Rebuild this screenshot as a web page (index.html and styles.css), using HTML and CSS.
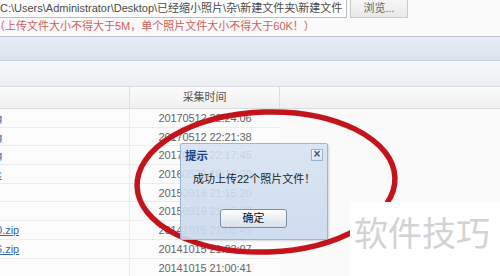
FILE: index.html
```html
<!DOCTYPE html>
<html lang="zh-CN">
<head>
    <meta charset="UTF-8">
    <title>照片上传</title>
    <link rel="stylesheet" href="styles.css">
</head>
<body>
    <div class="upload">
        <div class="upload-path">C:\Users\Administrator\Desktop\已经缩小照片\杂\新建文件夹\新建文件</div>
        <div class="upload-btn">浏览...</div>
    </div>
    <div class="note">（上传文件大小不得大于5M，单个照片文件大小不得大于60K！）</div>

    <div class="panel">
        <div class="panel-head"></div>
        <div class="toolbar"></div>
        <div class="grid-head">
            <div class="col-name"></div>
            <div class="col-time">采集时间</div>
            <div class="col-rest"></div>
        </div>
        <div class="grid-body">
            <div class="row"><a class="col-name" href="#">g</a><div class="col-time">20170512 22:24:06</div></div>
            <div class="row"><a class="col-name" href="#">g</a><div class="col-time">20170512 22:21:38</div></div>
            <div class="row"><a class="col-name" href="#">g</a><div class="col-time">20170512 22:17:45</div></div>
            <div class="row"><a class="col-name" href="#">c</a><div class="col-time">20160523 10:12:30</div></div>
            <div class="row"><a class="col-name" href="#"></a><div class="col-time">20150919 21:15:20</div></div>
            <div class="row"><a class="col-name" href="#"></a><div class="col-time">20150919 21:10:33</div></div>
            <div class="row"><a class="col-name zip" href="#">0.zip</a><div class="col-time">20141015 21:05:45</div></div>
            <div class="row"><a class="col-name zip" href="#">6.zip</a><div class="col-time">20141015 21:03:07</div></div>
            <div class="row"><a class="col-name" href="#"></a><div class="col-time">20141015 21:00:41</div></div>
        </div>
    </div>

    <!-- 红色圈注 -->
    <svg class="mark" viewBox="0 0 500 276" width="500" height="276">
        <ellipse cx="266" cy="182" rx="129" ry="70" transform="rotate(-2 266 182)" fill="none" stroke="#c4131b" stroke-width="5.5"></ellipse>
    </svg>

    <!-- 提示框 -->
    <div class="dialog">
        <div class="dialog-title">
            <span>提示</span>
            <span class="dialog-close">&#215;</span>
        </div>
        <div class="dialog-msg">成功上传22个照片文件！</div>
        <div class="dialog-btn">确定</div>
    </div>

    <div class="watermark">软件技巧</div>
</body>
</html>
```

FILE: styles.css
```css
/* 基础 */
body {
    margin: 0;
    width: 500px;
    height: 276px;
    overflow: hidden;
    position: relative;
    background-color: #fafafa;
    font-family: "Liberation Sans", "Noto Sans CJK SC", sans-serif;
    font-size: 11px;
    color: #444;
}

/* 上传栏 */
.upload {
    display: flex;
    gap: 3px;
    height: 18px;
}

.upload-path {
    width: 347px;
    box-sizing: border-box;
    background-color: #fff;
    border-right: 1px solid #b9c0ca;
    border-bottom: 1px solid #b9c0ca;
    line-height: 17px;
    white-space: nowrap;
    overflow: hidden;
    color: #4a4a4a;
}

.upload-btn {
    width: 58px;
    box-sizing: border-box;
    border: 1px solid #cacaca;
    border-top: none;
    background: linear-gradient(#f6f6f6, #e9e9e9);
    text-align: center;
    line-height: 17px;
    color: #666;
}

.note {
    height: 18px;
    line-height: 16px;
    margin-left: -6px;
    color: #d0605b;
    white-space: nowrap;
}

/* 面板 */
.panel-head {
    height: 23px;
    border-top: 1px solid #b7c4d4;
    background: linear-gradient(#e8edf4, #dbe3ed);
}

.toolbar {
    height: 25px;
    border-top: 1px solid #c9d3de;
    border-bottom: 1px solid #d4dae1;
    background: linear-gradient(#f6f7f9, #eceef2);
}

.grid-head {
    display: flex;
    height: 21px;
    border-bottom: 1px solid #dcdcdc;
    background: linear-gradient(#fbfbfb, #f0f0f0);
    line-height: 21px;
}

.col-name {
    width: 130px;
    flex: none;
    box-sizing: border-box;
    border-right: 1px solid #dedede;
}

.col-time {
    width: 150px;
    flex: none;
    box-sizing: border-box;
    text-align: center;
    color: #666;
    letter-spacing: -0.1px;
}

.grid-head .col-time {
    border-right: 1px solid #dedede;
    color: #555;
}

.grid-body {
    background-color: #fcfcfc;
    width: 280px;
}

.row {
    display: flex;
    height: 18.7px;
    box-sizing: border-box;
    border-bottom: 1px solid #ececec;
    line-height: 18px;
}

.row .col-name {
    color: #3866a6;
    text-indent: -4px;
    overflow: hidden;
    border-right-color: #ececec;
}

/* 圈注 */
.mark {
    position: absolute;
    left: 0;
    top: 0;
    pointer-events: none;
}

/* 提示框 */
.dialog {
    position: absolute;
    left: 180px;
    top: 143px;
    width: 148px;
    height: 97px;
    box-sizing: border-box;
    border: 1px solid #9fb6d3;
    border-radius: 2px;
    background: linear-gradient(rgba(214, 226, 242, 0.86), rgba(203, 218, 238, 0.92));
    box-shadow: 1px 1px 2px rgba(0, 0, 0, 0.15);
    display: flex;
    flex-direction: column;
}

.dialog-title {
    display: flex;
    justify-content: space-between;
    align-items: center;
    height: 21px;
    padding: 0 4px 0 4px;
    font-weight: bold;
    color: #15428b;
    font-size: 11.5px;
}

.dialog-close {
    width: 12px;
    height: 12px;
    box-sizing: border-box;
    border: 1px solid #9ab0cc;
    background: linear-gradient(#f3f7fc, #dbe5f2);
    font-size: 12px;
    line-height: 9px;
    text-align: center;
    color: #3d5a80;
}

.dialog-msg {
    margin: 7px 0 0 12px;
    line-height: 14px;
    color: #222;
}

.dialog-btn {
    margin: 23px 0 0 39px;
    width: 67px;
    height: 19px;
    box-sizing: border-box;
    border: 1px solid #7d8fa8;
    border-radius: 3px;
    background: linear-gradient(#ffffff, #e8edf3 55%, #d9e0e9);
    text-align: center;
    line-height: 17px;
    color: #111;
}

/* 水印 */
.watermark {
    position: absolute;
    left: 350px;
    top: 202px;
    width: 150px;
    height: 74px;
    box-sizing: border-box;
    padding: 8px 0 0 4px;
    background-color: #fff;
    color: #d3d3d3;
    font-family: "Noto Sans CJK SC", sans-serif;
    font-size: 34px;
    line-height: 44px;
    white-space: nowrap;
}
```
